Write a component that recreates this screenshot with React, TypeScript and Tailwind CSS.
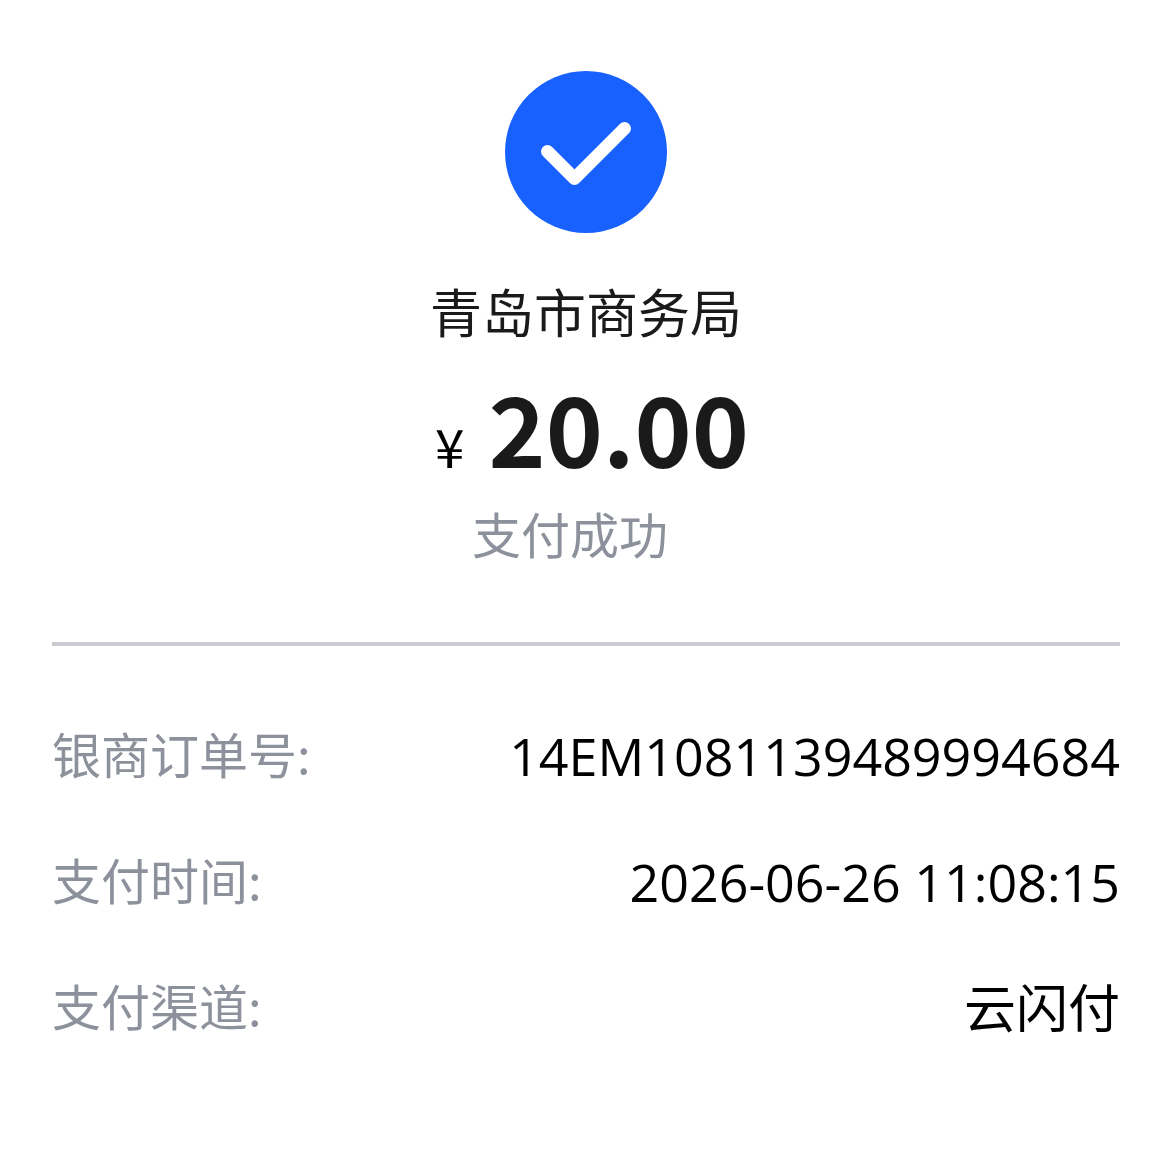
import React from 'react';

interface DetailRowProps {
  label: string;
  value: string;
}

const details: DetailRowProps[] = [
  { label: '银商订单号:', value: '14EM1081139489994684' },
  { label: '支付时间:', value: '2026-06-26 11:08:15' },
  { label: '支付渠道:', value: '云闪付' },
];

const SuccessIcon: React.FC = () => {
  return (
    <svg className="size-[162px]" viewBox="0 0 162 162" fill="none" aria-hidden="true">
      <circle cx="81" cy="81" r="81" fill="#1961fe" />
      <path
        d="M42.5 80.5L69.5 107.5L119.5 57.5"
        stroke="#ffffff"
        strokeWidth="13"
        strokeLinecap="round"
        strokeLinejoin="round"
      />
    </svg>
  );
};

const DetailRow: React.FC<DetailRowProps> = ({ label, value }) => {
  return (
    <div className="flex h-[126px] items-center justify-between">
      <dt className="text-[49px] leading-[64px] text-[#8c919b]">{label}</dt>
      <dd className="pt-1.5 font-['Open_Sans','Noto_Sans_CJK_SC',sans-serif] text-[52px] leading-[64px] text-black">{value}</dd>
    </div>
  );
};

const App: React.FC = () => {
  return (
    <main className="min-h-screen bg-white px-[52px] pt-[71px] font-['Noto_Sans_CJK_SC',sans-serif]">
      <section className="flex flex-col items-center">
        <SuccessIcon />
        <h1 className="mt-[46px] text-[52px] leading-[64px] text-[#1a1a1a]">青岛市商务局</h1>
        <p className="mt-[35px] flex items-baseline gap-6 pl-3">
          <span className="text-[53px] leading-none text-black">¥</span>
          <span className="text-[97px] leading-[96px] font-bold text-[#1a1a1a]">20.00</span>
        </p>
        <p className="mt-[27px] pr-8 text-[49px] leading-[64px] text-[#8c919b]">支付成功</p>
      </section>

      <hr className="mt-[77px] border-t-4 border-[#cbccd2]" />

      <dl className="mt-11">
        {details.map((item) => (
          <DetailRow key={item.label} label={item.label} value={item.value} />
        ))}
      </dl>
    </main>
  );
};

export default App;
